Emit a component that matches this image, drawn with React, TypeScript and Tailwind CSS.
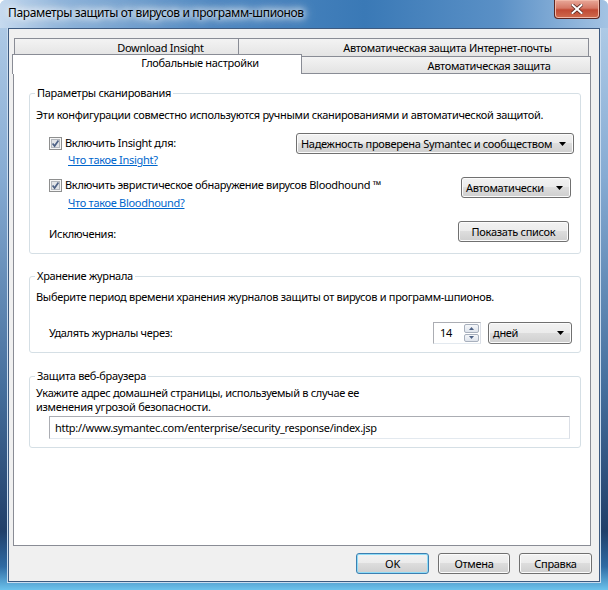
import type { ReactNode } from 'react';

const btnBg =
  'bg-[linear-gradient(to_bottom,#f2f2f2_0%,#ebebeb_49%,#dddddd_50%,#cfcfcf_100%)]';

function CheckBox() {
  return (
    <svg width="13" height="13" viewBox="0 0 13 13" className="shrink-0">
      <rect x="0.5" y="0.5" width="12" height="12" fill="#f6f6f6" stroke="#8e8f8f" />
      <rect x="2.5" y="2.5" width="8" height="8" fill="#e2e4e7" stroke="#b3b7bd" />
      <path d="M3.6 6.4 L5.6 9 L9.4 3.6" fill="none" stroke="#4d6185" strokeWidth="1.7" />
    </svg>
  );
}

function Arrow() {
  return (
    <svg width="7" height="4" viewBox="0 0 7 4" className="shrink-0">
      <path d="M0 0 H7 L3.5 4 Z" fill="#000" />
    </svg>
  );
}

function Combo({ label, className }: { label: string; className: string }) {
  return (
    <div
      className={`flex items-center rounded-[3px] border border-[#707070] shadow-[inset_0_0_0_1px_#fbfbfb] pl-[4px] pr-[7px] ${btnBg} ${className}`}
    >
      <span className="flex-1 whitespace-nowrap">{label}</span>
      <Arrow />
    </div>
  );
}

function Btn({ children, className, isDefault = false }: { children: ReactNode; className: string; isDefault?: boolean }) {
  return (
    <button
      className={`flex items-center justify-center rounded-[3px] border ${
        isDefault
          ? 'border-[#3c7fb1] shadow-[inset_0_0_0_1px_#8fdcf7]'
          : 'border-[#707070] shadow-[inset_0_0_0_1px_#fbfbfb]'
      } ${btnBg} ${className}`}
    >
      {children}
    </button>
  );
}

function Group({ title, className, children }: { title: string; className: string; children: ReactNode }) {
  return (
    <div className={`relative ml-[15px] mr-[9px] rounded-[3px] border border-[#d5dfe5] ${className}`}>
      <span className="absolute -top-[8px] left-[5px] bg-white px-[2px] leading-[14px]">{title}</span>
      {children}
    </div>
  );
}

function Link({ children }: { children: ReactNode }) {
  return <span className="text-[#0066cc] underline leading-[14px] h-[14px]">{children}</span>;
}

export default function App() {
  return (
    <div className="w-[608px] h-[590px] flex flex-col rounded-t-[6px] overflow-hidden font-['Segoe_UI','Noto_Sans',sans-serif] text-[11px] tracking-[-0.3px] leading-[14px] text-black bg-[linear-gradient(to_bottom,#b5cfe9_0%,#86abd3_30%,#46709e_65%,#213f69_90%,#2f6aa3_96%,#6cc2ec_100%)]">
      {/* title bar */}
      <div className="relative h-[28px] shrink-0 flex items-start bg-[linear-gradient(to_right,#c6daef_0%,#8fb4da_10%,#4f88c1_35%,#3a79b6_60%,#5a90c6_82%,#a4c3e3_100%)]">
        <span className="mt-[5px] ml-[8px] text-[12px] tracking-[-0.35px] leading-[16px] [text-shadow:0_0_6px_#fff,0_0_10px_#fff,0_0_14px_#fff]">
          Параметры защиты от вирусов и программ-шпионов
        </span>
        <div className="absolute right-[8px] top-0 w-[46px] h-[19px] rounded-b-[4px] border border-t-0 border-[#5b2622] bg-[linear-gradient(to_bottom,#e8a899_0%,#d57866_45%,#c14a34_55%,#cf6b4e_100%)] shadow-[inset_0_0_0_1px_#f1b8a8] flex items-center justify-center">
          <svg width="12" height="10" viewBox="0 0 12 10">
            <path d="M1.5 1 L10.5 9 M10.5 1 L1.5 9" stroke="#5a2a24" strokeWidth="3.6" strokeLinecap="square" />
            <path d="M1.5 1 L10.5 9 M10.5 1 L1.5 9" stroke="#fff" strokeWidth="2" strokeLinecap="square" />
          </svg>
        </div>
      </div>

      {/* client area */}
      <div className="mx-[8px] mb-[8px] flex-1 flex flex-col bg-[#f0f0f0] border border-[#3d5a80] shadow-[0_0_0_1px_#c9dcef]">
        <div className="ml-[4px] mt-[9px] w-[578px]">
          {/* tab row 1 */}
          <div className="flex h-[18px] ml-[1px]">
            <div className="w-[225px] h-[19px] border border-b-0 border-[#898c95] bg-[linear-gradient(to_bottom,#f3f3f3,#e3e3e3)] pl-[68px] text-center leading-[17px]">
              Download Insight
            </div>
            <div className="-ml-px w-[351px] h-[19px] border border-b-0 border-[#898c95] bg-[linear-gradient(to_bottom,#f3f3f3,#e3e3e3)] pl-[68px] text-center leading-[17px]">
              Автоматическая защита Интернет-почты
            </div>
          </div>
          {/* tab row 2 */}
          <div className="flex items-end h-[17px]">
            <div className="relative z-10 -ml-px -mb-px w-[290px] h-[20px] border border-b-0 border-[#898c95] bg-white pl-[86px] text-center leading-[16px]">
              Глобальные настройки
            </div>
            <div className="-ml-px w-[290px] h-[17px] border border-b-0 border-[#898c95] bg-[linear-gradient(to_bottom,#f3f3f3,#e3e3e3)] pl-[86px] text-center leading-[18px]">
              Автоматическая защита
            </div>
          </div>

          {/* tab page */}
          <div className="h-[473px] border border-[#898c95] bg-white pt-[19px] flex flex-col">
            <Group title="Параметры сканирования" className="h-[161px] pt-[14px] pl-[6px]">
              <div className="whitespace-nowrap">
                Эти конфигурации совместно используются ручными сканированиями и автоматической защитой.
              </div>

              <div className="mt-[11px] flex items-start">
                <div className="ml-[13px] pt-[3px] flex flex-col">
                  <div className="flex items-center gap-[3px]">
                    <CheckBox />
                    <span>Включить Insight для:</span>
                  </div>
                  <div className="mt-[3px] ml-[19px]">
                    <Link>Что такое Insight?</Link>
                  </div>
                </div>
                <Combo label="Надежность проверена Symantec и сообществом" className="ml-auto mr-[6px] w-[278px] h-[21px]" />
              </div>

              <div className="mt-[10px] flex items-start">
                <div className="ml-[13px] pt-[1px] flex flex-col">
                  <div className="flex items-center gap-[3px]">
                    <CheckBox />
                    <span className="whitespace-nowrap">Включить эвристическое обнаружение вирусов Bloodhound ™</span>
                  </div>
                  <div className="mt-[4px] ml-[19px]">
                    <Link>Что такое Bloodhound?</Link>
                  </div>
                </div>
                <Combo label="Автоматически" className="ml-auto mr-[9px] w-[110px] h-[21px]" />
              </div>

              <div className="mt-[11px] flex items-start">
                <span className="ml-[13px] mt-[6px]">Исключения:</span>
                <Btn className="ml-auto mr-[11px] w-[111px] h-[21px]">Показать список</Btn>
              </div>
            </Group>

            <Group title="Хранение журнала" className="mt-[22px] h-[77px] pt-[13px] pl-[6px]">
              <div className="whitespace-nowrap">
                Выберите период времени хранения журналов защиты от вирусов и программ-шпионов.
              </div>
              <div className="mt-[18px] flex items-center">
                <span className="ml-[13px]">Удалять журналы через:</span>
                <div className="ml-auto flex items-center gap-[7px] mr-[8px]">
                  <div className="flex w-[48px] h-[22px] border border-[#abadb3] border-r-[#dbdfe6] border-b-[#e3e9ef] bg-white">
                    <span className="flex-1 pl-[6px] leading-[20px]">14</span>
                    <div className="w-[16px] flex flex-col gap-px py-px pr-px">
                      <div className="flex-1 flex items-center justify-center rounded-[2px] border border-[#a8b0bd] bg-[linear-gradient(to_bottom,#f5f7fa,#dfe4ec)]">
                        <svg width="5" height="3" viewBox="0 0 5 3"><path d="M0 3 H5 L2.5 0 Z" fill="#4d6185" /></svg>
                      </div>
                      <div className="flex-1 flex items-center justify-center rounded-[2px] border border-[#a8b0bd] bg-[linear-gradient(to_bottom,#f5f7fa,#dfe4ec)]">
                        <svg width="5" height="3" viewBox="0 0 5 3"><path d="M0 0 H5 L2.5 3 Z" fill="#4d6185" /></svg>
                      </div>
                    </div>
                  </div>
                  <Combo label="дней" className="w-[84px] h-[22px]" />
                </div>
              </div>
            </Group>

            <Group title="Защита веб-браузера" className="mt-[23px] h-[72px] pt-[9px] pl-[6px]">
              <div className="leading-[14px]">
                <div>Укажите адрес домашней страницы, используемый в случае ее</div>
                <div>изменения угрозой безопасности.</div>
              </div>
              <div className="mt-[2px] ml-[13px] w-[521px] h-[23px] border border-[#abadb3] border-r-[#dbdfe6] border-b-[#e3e9ef] bg-white pl-[5px] leading-[21px]">
                http://www.symantec.com/enterprise/security_response/index.jsp
              </div>
            </Group>
          </div>
        </div>

        {/* dialog buttons */}
        <div className="mt-[7px] mr-[7px] flex justify-end gap-[9px]">
          <Btn isDefault className="w-[73px] h-[21px]">OK</Btn>
          <Btn className="w-[72px] h-[21px]">Отмена</Btn>
          <Btn className="w-[73px] h-[21px]">Справка</Btn>
        </div>
      </div>
    </div>
  );
}
